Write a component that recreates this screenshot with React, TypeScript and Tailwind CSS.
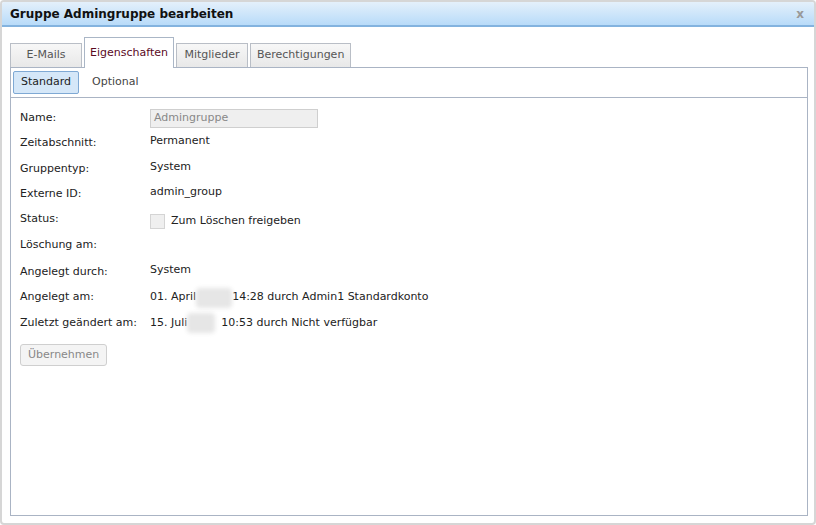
import React from "react"

const font = { fontFamily: "Tahoma, 'DejaVu Sans', Verdana, sans-serif" }

interface RowProps {
  label: string
  children?: React.ReactNode
  h: string
}

function Row({ label, children, h }: RowProps) {
  return (
    <div className={`flex items-center ${h}`}>
      <div className="w-[130px] shrink-0">{label}</div>
      <div className="flex items-center">{children}</div>
    </div>
  )
}

function Blur({ w }: { w: string }) {
  return <span className={`inline-block h-[20px] ${w} bg-[#e6e6e6] blur-[2px] rounded-sm`} />
}

export default function App() {
  const tabs = ["E-Mails", "Eigenschaften", "Mitglieder", "Berechtigungen"]
  return (
    <div style={font} className="w-[816px] h-[525px] bg-white text-[11px] text-[#222]">
      <div className="w-full h-full rounded-[4px] border-2 border-[#d6d6d6] flex flex-col overflow-hidden">
        {/* Kopfzeile */}
        <div className="h-[25px] shrink-0 flex items-center justify-between px-[8px] bg-gradient-to-b from-[#e4f0fb] to-[#b8dbf9] border-b-2 border-[#83b3df]">
          <span className="text-[12px] font-bold text-[#111]">Gruppe Admingruppe bearbeiten</span>
          <span className="text-[12px] font-bold text-[#999] pr-[2px]">x</span>
        </div>

        <div className="flex-1 flex flex-col pl-[8px] pr-[6px] pt-[10px] pb-[7px]">
          {/* Tabs */}
          <div className="flex items-end gap-[2px] h-[30px] shrink-0">
            {tabs.map((t, i) =>
              i === 1 ? (
                <div key={t} className="h-[31px] px-[5px] flex items-center border border-b-0 border-[#aab6c6] bg-white text-[#5a0a1e] relative top-[1px]">
                  {t}
                </div>
              ) : (
                <div key={t} className="h-[24px] min-w-[72px] px-[6px] flex items-center justify-center border border-b-0 border-[#b9bec6] bg-gradient-to-b from-[#f7f7f7] to-[#e8e8e8] text-[#555]">
                  {t}
                </div>
              ),
            )}
          </div>

          {/* Panel */}
          <div className="flex-1 border border-[#aab4c4] flex flex-col">
            <div className="h-[30px] shrink-0 flex items-center gap-[13px] px-[2px] border-b border-[#aab4c4]">
              <div className="h-[23px] px-[7px] flex items-center bg-[#d5e7f8] border border-[#7fa9d4] rounded-[2px] text-[#222]">
                Standard
              </div>
              <div className="text-[#444]">Optional</div>
            </div>

            <div className="px-[9px] pt-[8px] flex flex-col">
              <Row label="Name:" h="h-[24px]">
                <div className="w-[168px] h-[19px] bg-[#efefef] border border-[#cfcfcf] px-[3px] flex items-center text-[#888]">
                  Admingruppe
                </div>
              </Row>
              <Row label="Zeitabschnitt:" h="h-[27px]">
                <span className="-mt-[4px]">Permanent</span>
              </Row>
              <Row label="Gruppentyp:" h="h-[24px]">
                <span className="-mt-[4px]">System</span>
              </Row>
              <Row label="Externe ID:" h="h-[26px]">
                <span className="-mt-[4px]">admin_group</span>
              </Row>
              <Row label="Status:" h="h-[25px]">
                <span className="w-[15px] h-[15px] bg-[#efefef] border border-[#d4d4d4] mr-[6px] mt-[3px]" />
                <span className="mt-[3px]">Zum Löschen freigeben</span>
              </Row>
              <Row label="Löschung am:" h="h-[27px]" />
              <Row label="Angelegt durch:" h="h-[26px]">
                <span className="-mt-[4px]">System</span>
              </Row>
              <Row label="Angelegt am:" h="h-[25px]">
                <span>01. April</span>
                <Blur w="w-[36px]" />
                <span>14:28 durch Admin1 Standardkonto</span>
              </Row>
              <Row label="Zuletzt geändert am:" h="h-[26px]">
                <span>15. Juli</span>
                <Blur w="w-[28px]" />
                <span className="ml-[6px]">10:53 durch Nicht verfügbar</span>
              </Row>
              <div className="mt-[8px]">
                <div className="inline-flex h-[22px] px-[7px] items-center border border-[#cfcfcf] rounded-[3px] bg-[#f4f4f4] text-[#888]">
                  Übernehmen
                </div>
              </div>
            </div>
          </div>
        </div>
      </div>
    </div>
  )
}
